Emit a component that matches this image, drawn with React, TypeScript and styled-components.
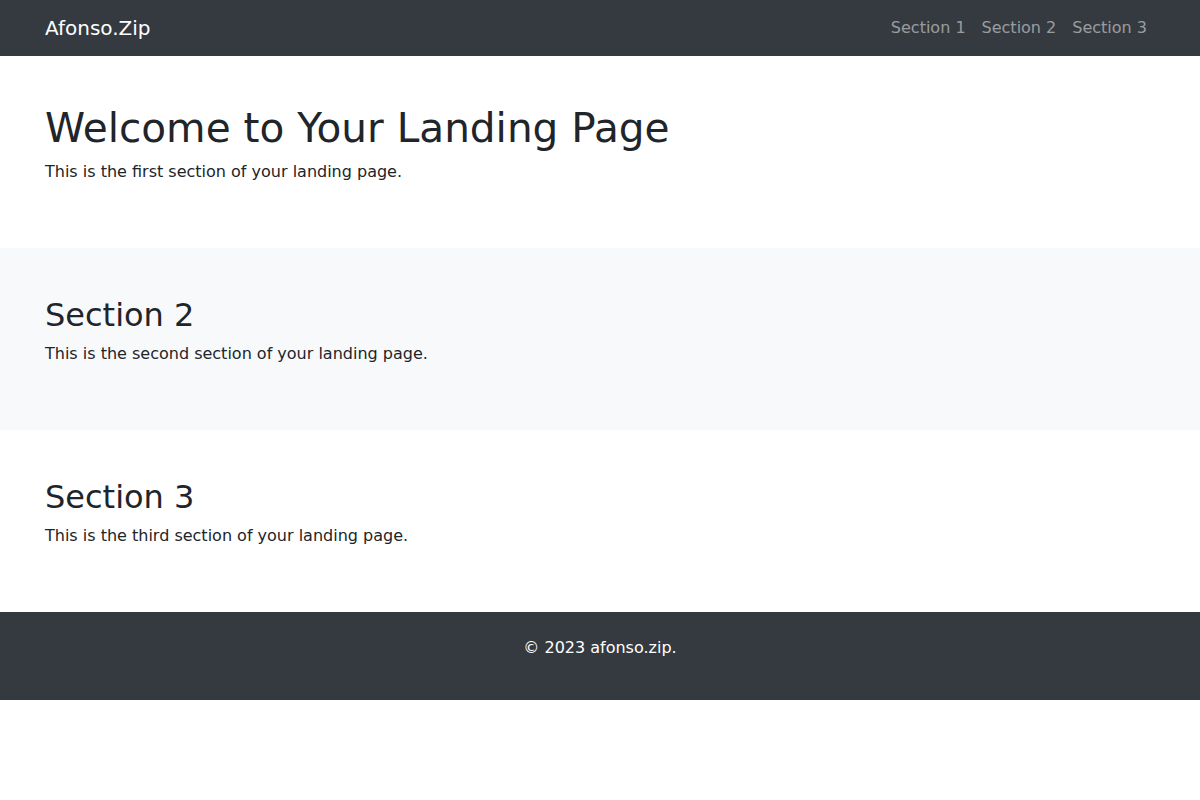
import React from "react";
import styled, { createGlobalStyle } from "styled-components";

const Global = createGlobalStyle`
  *, *::before, *::after { box-sizing: border-box; }
  body {
    margin: 0;
    font-family: "DejaVu Sans", sans-serif;
    font-size: 16px;
    line-height: 1.5;
    color: #212529;
    background: #fff;
  }
`;

const Container = styled.div`
  width: 100%;
  max-width: 1140px;
  margin: 0 auto;
  padding: 0 15px;
`;

const NavBar = styled.nav`
  background: #343a40;
  padding: 8px 16px;
`;

const NavInner = styled(Container)`
  display: flex;
  align-items: center;
  justify-content: space-between;
`;

const Brand = styled.a`
  color: #fff;
  font-size: 20px;
  line-height: 30px;
  padding: 5px 0;
  text-decoration: none;
`;

const NavList = styled.ul`
  display: flex;
  list-style: none;
  margin: 0;
  padding: 0;
`;

const NavLink = styled.a`
  display: block;
  padding: 8px;
  color: rgba(255, 255, 255, 0.5);
  text-decoration: none;
  line-height: 24px;
`;

const Section = styled.section<{ $light?: boolean }>`
  padding: 48px 0;
  background: ${(p) => (p.$light ? "#f8f9fa" : "transparent")};
`;

const Title = styled.h1<{ $size: number; $lh: number }>`
  margin: 0 0 8px;
  font-size: ${(p) => p.$size}px;
  font-weight: 500;
  line-height: ${(p) => p.$lh}px;
`;

const Text = styled.p`
  margin: 0 0 16px;
`;

const Footer = styled.footer`
  background: #343a40;
  color: #fff;
  padding: 24px 0;
  text-align: center;
`;

export default function App() {
  return (
    <>
      <Global />
      <NavBar>
        <NavInner>
          <Brand href="#">Afonso.Zip</Brand>
          <NavList>
            <li><NavLink href="#s1">Section 1</NavLink></li>
            <li><NavLink href="#s2">Section 2</NavLink></li>
            <li><NavLink href="#s3">Section 3</NavLink></li>
          </NavList>
        </NavInner>
      </NavBar>
      <Section id="s1">
        <Container>
          <Title $size={40.6} $lh={48}>Welcome to Your Landing Page</Title>
          <Text>This is the first section of your landing page.</Text>
        </Container>
      </Section>
      <Section id="s2" $light>
        <Container>
          <Title as="h2" $size={32} $lh={38}>Section 2</Title>
          <Text>This is the second section of your landing page.</Text>
        </Container>
      </Section>
      <Section id="s3">
        <Container>
          <Title as="h2" $size={32} $lh={38}>Section 3</Title>
          <Text>This is the third section of your landing page.</Text>
        </Container>
      </Section>
      <Footer>
        <Container>
          <Text>© 2023 afonso.zip.</Text>
        </Container>
      </Footer>
    </>
  );
}
